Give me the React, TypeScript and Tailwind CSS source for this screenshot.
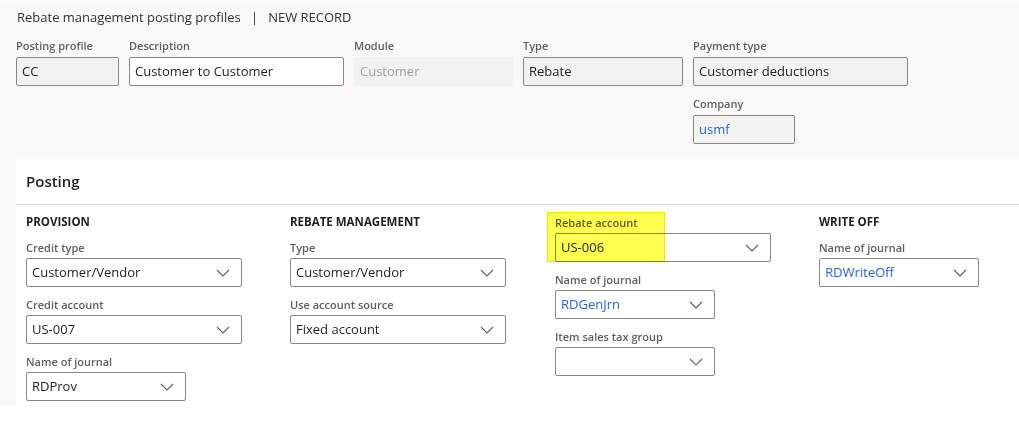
import React from 'react';

const FONT = 'font-["Segoe_UI","Open_Sans",sans-serif]';

function Chevron() {
  return (
    <svg width="14" height="8" viewBox="0 0 14 8" className="absolute right-[11px] top-1/2 -translate-y-1/2">
      <path d="M1 1 L7 7 L13 1" fill="none" stroke="#605e5c" strokeWidth="1.1" />
    </svg>
  );
}

interface TopFieldProps {
  label: string;
  value: string;
  width: string;
  variant?: 'readonly' | 'edit' | 'disabled';
  link?: boolean;
}

function TopField({ label, value, width, variant = 'readonly', link }: TopFieldProps) {
  const box =
    variant === 'edit'
      ? 'bg-white border border-[#8a8886]'
      : variant === 'disabled'
        ? 'bg-[#f3f2f1] border border-[#f3f2f1] text-[#a19f9d]'
        : 'bg-[#f3f2f1] border border-[#8a8886]';
  return (
    <div className={width}>
      <div className="h-[16px] text-[11px] leading-[16px] font-semibold text-[#605e5c] mb-[3px]">{label}</div>
      <div
        className={`h-[29px] rounded-[2px] px-[5px] flex items-center text-[13px] ${box} ${
          link ? 'text-[#2266e3]' : variant === 'disabled' ? '' : 'text-[#201f1e]'
        }`}
      >
        {value}
      </div>
    </div>
  );
}

interface SelectProps {
  label: string;
  value: string;
  short?: boolean;
  link?: boolean;
}

function SelectField({ label, value, short, link }: SelectProps) {
  return (
    <div className="mb-[10px]">
      <div className="h-[16px] text-[11px] leading-[16px] font-semibold text-[#605e5c] mb-[2px]">{label}</div>
      <div
        className={`relative h-[29px] ${short ? 'w-[160px]' : 'w-[216px]'} bg-white border border-[#8a8886] rounded-[2px] px-[5px] flex items-center text-[13px] ${
          link ? 'text-[#2266e3]' : 'text-[#201f1e]'
        }`}
      >
        {value}
        <Chevron />
      </div>
    </div>
  );
}

function SectionTitle({ children }: { children: React.ReactNode }) {
  return <div className="h-[16px] text-[11.5px] leading-[16px] font-bold text-[#201f1e] mb-[10px]">{children}</div>;
}

export default function App() {
  return (
    <div className={`w-[1019px] h-[421px] overflow-hidden bg-white ${FONT}`}>
      <div className="bg-[#faf9f8] border-t-2 border-white h-[405px] flex flex-col">
        <div className="pl-[17px] pt-[5px] h-[30px] text-[13px] leading-[20px] text-[#323130]">
          Rebate management posting profiles&nbsp;&nbsp;&nbsp;|&nbsp;&nbsp;&nbsp;NEW RECORD
        </div>

        <div className="flex gap-[10px] pl-[16px] pt-[11px]">
          <TopField label="Posting profile" value="CC" width="w-[103px]" />
          <TopField label="Description" value="Customer to Customer" width="w-[215px]" variant="edit" />
          <TopField label="Module" value="Customer" width="w-[159px]" variant="disabled" />
          <TopField label="Type" value="Rebate" width="w-[160px]" />
          <div className="flex flex-col gap-[10px]">
            <TopField label="Payment type" value="Customer deductions" width="w-[215px]" />
            <TopField label="Company" value="usmf" width="w-[102px]" link />
          </div>
        </div>

        <div className="ml-[16px] mt-[14px] flex-1 bg-white">
          <div className="h-[47px] pl-[10px] pt-[12px] text-[15px] leading-[22px] font-semibold text-[#201f1e] border-b border-[#e1dfdd]">
            Posting
          </div>
          <div className="flex pl-[10px] pt-[9px]">
            <div className="w-[264px]">
              <SectionTitle>PROVISION</SectionTitle>
              <SelectField label="Credit type" value="Customer/Vendor" />
              <SelectField label="Credit account" value="US-007" />
              <SelectField label="Name of journal" value="RDProv" short />
            </div>
            <div className="w-[265px]">
              <SectionTitle>REBATE MANAGEMENT</SectionTitle>
              <SelectField label="Type" value="Customer/Vendor" />
              <SelectField label="Use account source" value="Fixed account" />
            </div>
            <div className="w-[264px] relative pt-[1px]">
              <SelectField label="Rebate account" value="US-006" />
              <SelectField label="Name of journal" value="RDGenJrn" short link />
              <SelectField label="Item sales tax group" value="" short />
              <div className="absolute left-[-8px] top-[-2px] w-[118px] h-[50px] bg-[#ffff50] border border-[#f2e600] mix-blend-multiply" />
            </div>
            <div className="w-[180px]">
              <SectionTitle>WRITE OFF</SectionTitle>
              <SelectField label="Name of journal" value="RDWriteOff" short link />
            </div>
          </div>
        </div>
      </div>
    </div>
  );
}
